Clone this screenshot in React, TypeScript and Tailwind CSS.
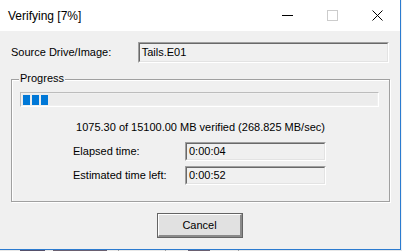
import React from 'react';

const sunken =
  'border border-t-[#a0a0a0] border-l-[#a0a0a0] border-b-white border-r-white';
const sunkenInner =
  'border border-t-[#696969] border-l-[#696969] border-b-[#e3e3e3] border-r-[#e3e3e3]';

const ReadOnlyBox = ({ value, className }: { value: string; className: string }) => (
  <div className={`${sunken} ${className}`}>
    <div className={`${sunkenInner} h-full flex items-center pl-[2px] bg-[#f0f0f0]`}>
      {value}
    </div>
  </div>
);

const TitleButtons = () => (
  <div className="flex h-full">
    <div className="w-[45px] h-full flex items-center justify-center">
      <svg width="11" height="11" viewBox="0 0 11 11">
        <path d="M0 5.5h11" stroke="#000" strokeWidth="1" />
      </svg>
    </div>
    <div className="w-[45px] h-full flex items-center justify-center">
      <svg width="11" height="11" viewBox="0 0 11 11">
        <rect x="0.5" y="0.5" width="10" height="10" fill="none" stroke="#cccccc" />
      </svg>
    </div>
    <div className="w-[45px] h-full flex items-center justify-center">
      <svg width="11" height="11" viewBox="0 0 11 11">
        <path d="M0.5 0.5L10.5 10.5M10.5 0.5L0.5 10.5" stroke="#000" strokeWidth="1" />
      </svg>
    </div>
  </div>
);

export default function App() {
  const blocks = [0, 1, 2];

  return (
    <div
      className="w-[402px] h-[251px] overflow-hidden bg-[#f0f0f0] flex flex-col text-black"
      style={{ fontFamily: '"Liberation Sans", Arial, sans-serif' }}
    >
      <div className="w-[401px] h-[250px] flex flex-col border-r border-b border-[#2b7bd0]">
        {/* title bar */}
        <div className="h-[31px] bg-white flex items-center justify-between">
          <span className="pl-[8px] text-[12px] leading-none">Verifying [7%]</span>
          <TitleButtons />
        </div>

        {/* body */}
        <div className="flex-1 bg-[#f0f0f0] text-[11px] leading-[13px] px-[11px] pt-[11px] flex flex-col">
          <div className="flex items-center h-[21px]">
            <span className="w-[127px]">Source Drive/Image:</span>
            <ReadOnlyBox value="Tails.E01" className="w-[252px] h-[21px]" />
          </div>

          <div className="relative mt-[16px] w-[379px] h-[123px] border border-[#a0a0a0] shadow-[inset_1px_1px_0_#fff,1px_1px_0_#fff] px-[8px] pt-[12px] flex flex-col">
            <span className="absolute left-[7px] top-[-8px] px-[1px] bg-[#f0f0f0]">Progress</span>

            <div className="w-[359px] h-[15px] border border-t-[#bcbcbc] border-l-[#bcbcbc] border-b-white border-r-white bg-[#ececec]">
              <div className="h-full border border-[#f0f0f0] bg-[#ececec] flex gap-[2px] pl-[1px] pt-[1px]">
                {blocks.map((b) => (
                  <div key={b} className="w-[7px] h-[10px] bg-[#0078d7]" />
                ))}
              </div>
            </div>

            <div className="mt-[14px] text-center">
              1075.30 of 15100.00 MB verified (268.825 MB/sec)
            </div>

            <div className="mt-[8px] ml-[53px] grid grid-cols-[112px_141px] gap-y-[5px] items-center">
              <span>Elapsed time:</span>
              <ReadOnlyBox value="0:00:04" className="h-[19px]" />
              <span>Estimated time left:</span>
              <ReadOnlyBox value="0:00:52" className="h-[19px]" />
            </div>
          </div>

          <div className="mt-[11px] flex justify-center">
            <div className="w-[86px] h-[25px] border border-[#646464]">
              <div className="h-full border-t border-l border-b-2 border-r-2 border-t-white border-l-white border-b-[#8a8a8a] border-r-[#8a8a8a] bg-[#e1e1e1] flex items-center justify-center">
                Cancel
              </div>
            </div>
          </div>
        </div>
      </div>

      {/* glimpse of the window behind */}
      <div className="h-[1px] flex">
        <div className="w-[20px] bg-[#e8e8e8]" />
        <div className="w-[25px] bg-[#55506a]" />
        <div className="w-[8px] bg-[#e8e8e8]" />
        <div className="w-[54px] bg-[#6a6070]" />
        <div className="w-[11px] bg-[#e8e8e8]" />
        <div className="w-[1px] bg-[#a0a0a0]" />
        <div className="w-[46px] bg-[#e8e8e8]" />
        <div className="w-[1px] bg-[#a0a0a0]" />
        <div className="w-[22px] bg-[#e8e8e8]" />
        <div className="w-[22px] bg-[#6a6070]" />
        <div className="w-[28px] bg-[#e8e8e8]" />
        <div className="w-[1px] bg-[#a0a0a0]" />
        <div className="flex-1 bg-[#e8e8e8]" />
      </div>
    </div>
  );
}
